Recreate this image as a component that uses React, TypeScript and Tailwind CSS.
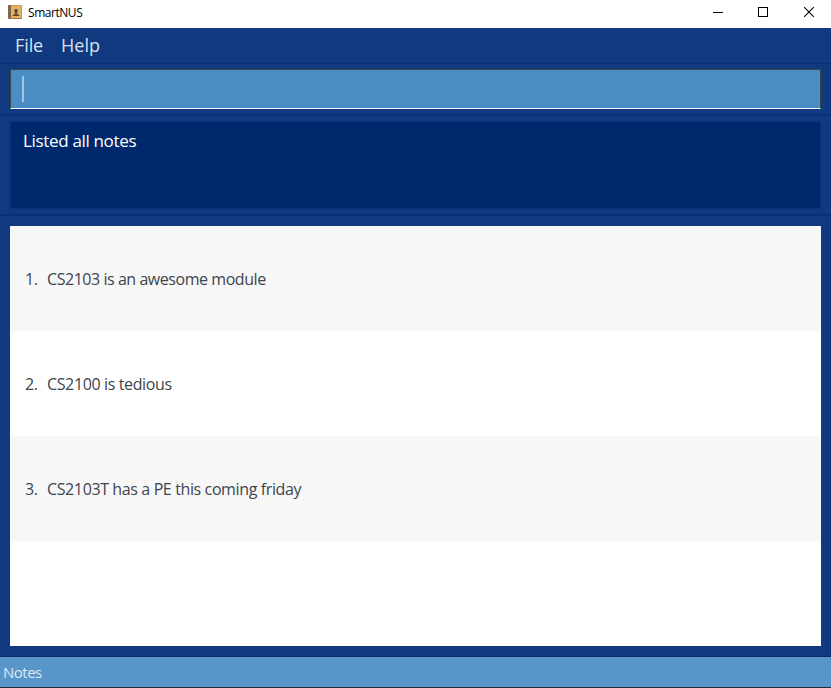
const notes = [
  { text: "CS2103 is an awesome module", tracking: "tracking-[-0.45px]" },
  { text: "CS2100 is tedious", tracking: "tracking-[-0.37px]" },
  { text: "CS2103T has a PE this coming friday", tracking: "tracking-[-0.38px]" },
];

function AppIcon() {
  return (
    <svg width="15" height="15" viewBox="0 0 15 15" className="mt-[5px] ml-2 shrink-0">
      <rect x="0" y="0" width="14" height="14" rx="1" fill="#c99a50" />
      <rect x="0" y="0" width="3" height="14" rx="1" fill="#80664f" />
      <rect x="3" y="1" width="10" height="12" fill="#dfb266" />
      <path d="M6.500 4h3v3l-.7 1.200v.8l2.400.9V11H4.800V9.900l2.400-.9v-.8L6.500 7z" fill="#5b4630" />
      <rect x="0" y="13" width="14" height="1" fill="#a07840" />
    </svg>
  );
}

function TitleBar() {
  return (
    <header className="flex h-7 bg-white">
      <AppIcon />
      <span className="ml-[5px] mt-[4px] text-[12px] leading-[17px] tracking-[-0.45px] text-black">SmartNUS</span>
      <svg width="104" height="14" viewBox="0 0 104 14" className="ml-auto mr-[15px] mt-[5px]" fill="none" stroke="#000">
        <path d="M1 7.500H11" />
        <rect x="46.500" y="2.500" width="9" height="9" />
        <path d="M92.200 2.200L101.800 11.800M101.800 2.200L92.200 11.800" strokeWidth="1.100" />
      </svg>
    </header>
  );
}

export default function App() {
  return (
    <div className="flex h-[688px] w-[831px] flex-col overflow-hidden bg-[#10397f] font-['Open_Sans','Noto_Sans',sans-serif]">
      <TitleBar />
      <nav className="flex h-9 border-b border-[#092f75] pl-[15px] text-[18px] leading-[35px] text-[#d8e1ef]">
        <span className="w-[46px] tracking-[-0.1px]">File</span>
        <span>Help</span>
      </nav>
      <section className="h-[52px] border-b-2 border-[#08307a] px-[10px] pt-[5px]">
        <div className="h-10 border border-[#3c434b] border-b-white bg-[#4a8cc4] pl-[11px] pt-[6px]">
          <div className="h-[26px] w-[2px] bg-[#a4c5e1]" />
        </div>
      </section>
      <section className="h-[100px] border-b-2 border-[#08307a] px-[10px] pt-[5px]">
        <div className="h-[88px] rounded-[3px] border border-[#07307a] bg-[#00296d] pl-3 pt-[7px] text-[17px] leading-6 tracking-[-0.33px] text-white">
          Listed all notes
        </div>
      </section>
      <main className="flex-1 border-b border-[#062b68] px-[10px] pt-[10px]">
        <ol className="h-[420px] bg-white text-[16px] leading-[107px] text-[#3d454d]">
          {notes.map((note, index) => (
            <li key={note.text} className="flex h-[105px] pl-[15px] odd:bg-[#f7f7f7] even:bg-white">
              <span className="w-[22px] tracking-[-0.4px]">{index + 1}.</span>
              <span className={note.tracking}>{note.text}</span>
            </li>
          ))}
        </ol>
      </main>
      <footer className="h-[31px] border-b border-[#1d2b3c] bg-[#5896ca] pl-[3px] text-[15px] leading-[31px] tracking-[-0.5px] text-[#dfeaf4]">
        Notes
      </footer>
    </div>
  );
}
